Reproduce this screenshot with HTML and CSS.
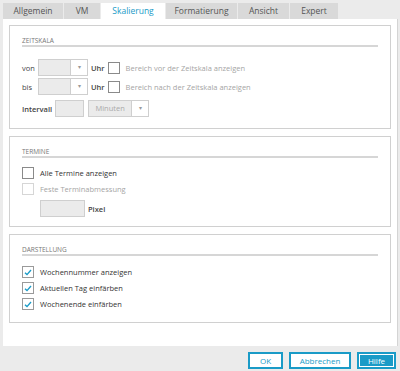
FILE: index.html
```html
<!DOCTYPE html>
<html lang="de">

<head>
  <meta charset="UTF-8">
  <meta name="viewport" content="width=device-width, initial-scale=1.0">
  <title>Einstellungen</title>
  <link rel="stylesheet" href="styles.css">
</head>

<body>

  <div class="tabs">
    <div class="tab t-allg">Allgemein</div>
    <div class="tab t-vm">VM</div>
    <div class="tab t-skal active">Skalierung</div>
    <div class="tab t-form">Formatierung</div>
    <div class="tab t-ans">Ansicht</div>
    <div class="tab t-exp">Expert</div>
  </div>

  <div class="panel">
    <div class="group g-zeit">
      <div class="legend">ZEITSKALA</div>
      <div class="row r-von">
        <span class="lbl lbl-short">von</span>
        <div class="combo c-time"><span class="c-val"></span><span class="c-arrow">&#9662;</span></div>
        <span class="lbl lbl-uhr">Uhr</span>
        <span class="check"></span>
        <span class="txt dim">Bereich vor der Zeitskala anzeigen</span>
      </div>
      <div class="row r-bis">
        <span class="lbl lbl-short">bis</span>
        <div class="combo c-time"><span class="c-val"></span><span class="c-arrow">&#9662;</span></div>
        <span class="lbl lbl-uhr">Uhr</span>
        <span class="check"></span>
        <span class="txt dim">Bereich nach der Zeitskala anzeigen</span>
      </div>
      <div class="row r-int">
        <span class="lbl">Intervall</span>
        <div class="field f-int"></div>
        <div class="combo c-min"><span class="c-val">Minuten</span><span class="c-arrow">&#9662;</span></div>
      </div>
    </div>

    <div class="group g-term">
      <div class="legend">TERMINE</div>
      <div class="row r-check">
        <span class="check"></span>
        <span class="txt">Alle Termine anzeigen</span>
      </div>
      <div class="row r-check">
        <span class="check disabled"></span>
        <span class="txt dim">Feste Terminabmessung</span>
      </div>
      <div class="row r-pixel">
        <div class="field f-pixel"></div>
        <span class="lbl">Pixel</span>
      </div>
    </div>

    <div class="group g-dar">
      <div class="legend">DARSTELLUNG</div>
      <div class="row r-check">
        <span class="check on"><svg width="8" height="7" viewBox="0 0 8 7"><path d="M1 3.8 L3 5.6 L7 1" fill="none" stroke="#1a9bc7" stroke-width="1.4"/></svg></span>
        <span class="txt">Wochennummer anzeigen</span>
      </div>
      <div class="row r-check">
        <span class="check on"><svg width="8" height="7" viewBox="0 0 8 7"><path d="M1 3.8 L3 5.6 L7 1" fill="none" stroke="#1a9bc7" stroke-width="1.4"/></svg></span>
        <span class="txt">Aktuellen Tag einfärben</span>
      </div>
      <div class="row r-check">
        <span class="check on"><svg width="8" height="7" viewBox="0 0 8 7"><path d="M1 3.8 L3 5.6 L7 1" fill="none" stroke="#1a9bc7" stroke-width="1.4"/></svg></span>
        <span class="txt">Wochenende einfärben</span>
      </div>
    </div>
  </div>

  <div class="buttons">
    <button class="btn b-ok">OK</button>
    <button class="btn b-cancel">Abbrechen</button>
    <button class="btn b-help">Hilfe</button>
  </div>

</body>

</html>
```

FILE: styles.css
```css
* {
  padding: 0;
  margin: 0;
  box-sizing: border-box;
}

body {
  width: 400px;
  height: 371px;
  background-color: #ebebeb;
  font-family: 'Open Sans', 'Liberation Sans', sans-serif;
  font-size: 7.5px;
  color: #333;
  overflow: hidden;
}

.tabs {
  display: flex;
  gap: 1px;
  padding: 3px 0 0 3px;
  height: 19px;
}

.tab {
  background-color: #d9d9d9;
  color: #555;
  font-size: 8.5px;
  line-height: 16px;
  text-align: center;
}

.tab.active {
  background-color: #fff;
  color: #1a9bc7;
}

.t-allg { width: 60px; }
.t-vm { width: 36px; }
.t-skal { width: 64px; }
.t-form { width: 71px; }
.t-ans { width: 51px; }
.t-exp { width: 48px; }

.panel {
  width: 395px;
  height: 327px;
  margin-left: 3px;
  background-color: #fff;
  border-right: 1px solid #d4d4d4;
  padding: 6px 6px 0 6px;
  display: flex;
  flex-direction: column;
  gap: 7px;
}

.group {
  width: 382px;
  border: 1px solid #d0d0d0;
  padding: 0 12px;
}

.g-zeit { height: 104px; }
.g-term { height: 91px; }
.g-dar { height: 89px; }

.legend {
  font-size: 6.5px;
  color: #777;
  height: 21px;
  padding-top: 10px;
  line-height: 9px;
  border-bottom: 2px solid #d6d6d6;
}

.row {
  display: flex;
  align-items: center;
}

.r-von { margin-top: 12px; height: 17px; }
.r-bis { margin-top: 2px; height: 17px; }
.r-int { margin-top: 5px; height: 17px; }

.lbl {
  font-size: 7.5px;
  font-weight: 600;
  color: #444;
  margin-right: 3px;
}

.lbl-short { width: 16px; margin-right: 0; font-weight: 400; }
.lbl-uhr { margin-left: 3px; }

.combo {
  display: flex;
  height: 17px;
  border: 1px solid #cfcfcf;
  background-color: #ebebeb;
}

.c-val {
  flex: 1;
  border-right: 1px solid #cfcfcf;
  color: #aaa;
  font-size: 7.5px;
  line-height: 15px;
  text-align: center;
}

.c-arrow {
  width: 16px;
  background-color: #fff;
  color: #999;
  font-size: 6px;
  line-height: 15px;
  text-align: center;
}

.c-time { width: 50px; }
.c-min { width: 61px; margin-left: 4px; }

.field {
  height: 17px;
  border: 1px solid #cfcfcf;
  background-color: #ebebeb;
}

.f-int { width: 29px; }
.f-pixel { width: 45px; margin-right: 3px; margin-left: 18px; }

.check {
  width: 12px;
  height: 12px;
  border: 1px solid #8a8a8a;
  background-color: #fff;
  display: flex;
  align-items: center;
  justify-content: center;
  margin-right: 6px;
}

.check.disabled {
  border-color: #d6d6d6;
}

.check.on {
  border-color: #9a9a9a;
}

.txt {
  font-size: 7.5px;
  color: #333;
}

.txt.dim {
  color: #a5a5a5;
}

.r-check { height: 16px; }
.g-term .legend + .r-check { margin-top: 7px; }
.g-dar .legend + .r-check { margin-top: 8px; }
.r-pixel { margin-top: 3px; height: 17px; }

.buttons {
  display: flex;
  justify-content: flex-end;
  gap: 6px;
  padding: 6px 4px 0 0;
}

.btn {
  height: 17px;
  border: 2px solid #1a9bc7;
  background-color: #fff;
  color: #1a9bc7;
  font-family: 'Open Sans', 'Liberation Sans', sans-serif;
  font-size: 8px;
}

.b-ok { width: 35px; }
.b-cancel { width: 62px; }
.b-help {
  width: 39px;
  background-color: #1a9bc7;
  color: #fff;
  box-shadow: inset 0 0 0 1px #fff;
}
```
